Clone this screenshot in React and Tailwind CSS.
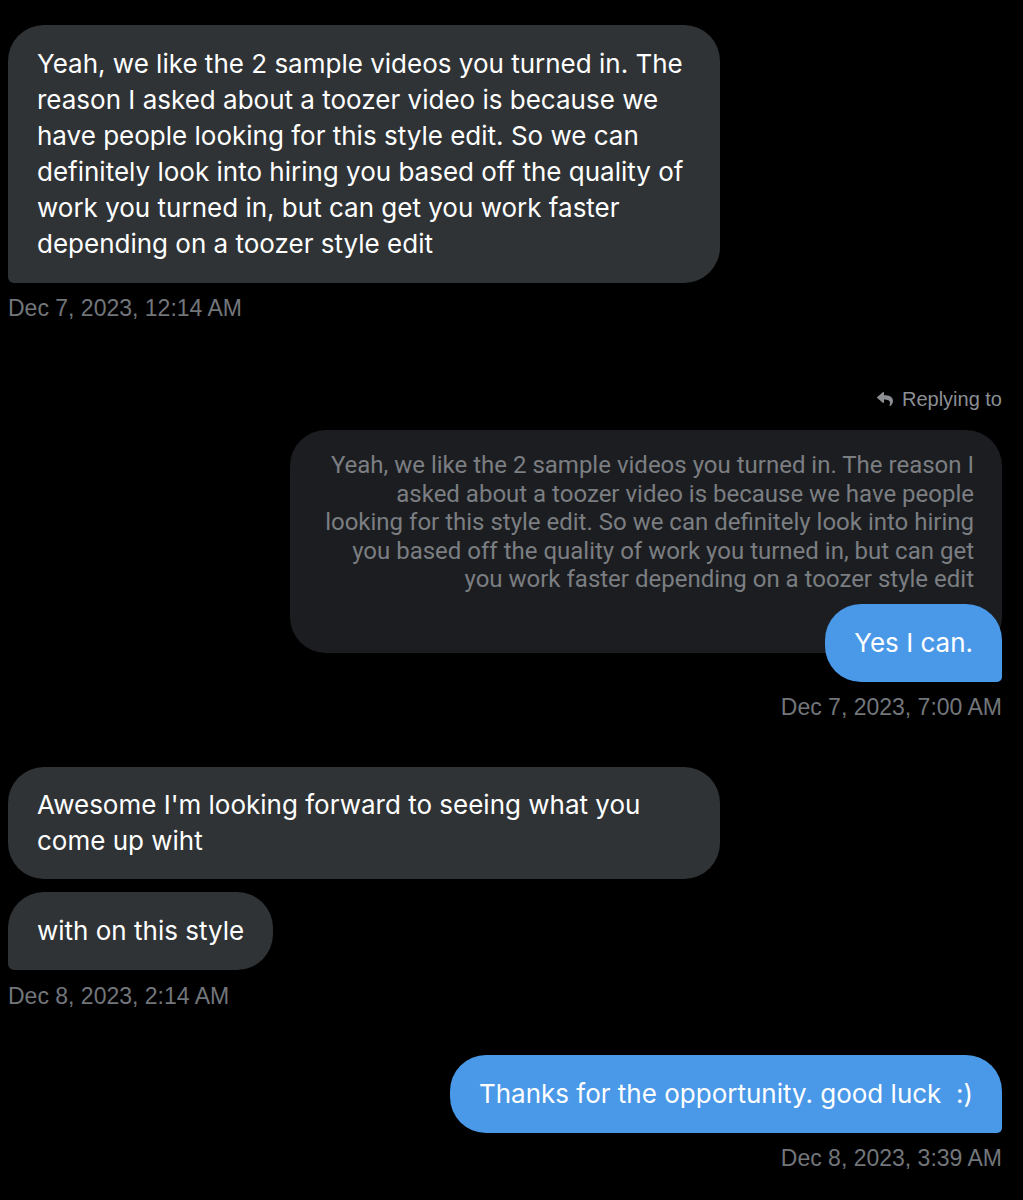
import { FaReply } from 'react-icons/fa'

const sans = "font-['Inter','Liberation_Sans',sans-serif]"

function Stamp({ children, right }) {
  return (
    <p
      className={`text-[23px] leading-[28px] text-[#72767b] font-['Liberation_Sans','Arial',sans-serif] ${right ? 'text-right' : ''}`}
    >
      {children}
    </p>
  )
}

export default function App() {
  return (
    <div className={`min-h-[1200px] bg-black ${sans} pl-[8px] pr-[21px] pt-[25px] pb-[20px]`}>
      {/* incoming: first message */}
      <div className="w-[712px] rounded-[36px] rounded-bl-[6px] bg-[#2f3336] px-[29px] py-[21px] text-[26px] leading-[36px] text-white">
        <div className="whitespace-nowrap">Yeah, we like the 2 sample videos you turned in. The</div>
        <div className="whitespace-nowrap">reason I asked about a toozer video is because we</div>
        <div className="whitespace-nowrap">have people looking for this style edit. So we can</div>
        <div className="whitespace-nowrap">definitely look into hiring you based off the quality of</div>
        <div className="whitespace-nowrap">work you turned in, but can get you work faster</div>
        <div className="whitespace-nowrap">depending on a toozer style edit</div>
      </div>
      <div className="mt-[11px]">
        <Stamp>Dec 7, 2023, 12:14 AM</Stamp>
      </div>

      {/* outgoing reply */}
      <div className="mt-[64px] flex flex-col items-end">
        <div className="flex items-center gap-[9px] text-[20px] leading-[26px] text-[#8b8f94] font-['Liberation_Sans','Arial',sans-serif]">
          <FaReply className="w-[16px] h-[16px]" />
          <span>Replying to</span>
        </div>
        <div className="mt-[18px] w-[712px] rounded-[36px] bg-[#1c1d20] pl-[24px] pr-[28px] pt-[21px] pb-[59px] text-right text-[24px] leading-[28.6px] text-[#7b7e82] font-['Roboto',sans-serif]">
          <div className="whitespace-nowrap">Yeah, we like the 2 sample videos you turned in. The reason I</div>
          <div className="whitespace-nowrap">asked about a toozer video is because we have people</div>
          <div className="whitespace-nowrap">looking for this style edit. So we can definitely look into hiring</div>
          <div className="whitespace-nowrap">you based off the quality of work you turned in, but can get</div>
          <div className="whitespace-nowrap">you work faster depending on a toozer style edit</div>
        </div>
        <div className="-mt-[49px] rounded-[36px] rounded-br-[5px] bg-[#4a98e8] px-[29px] py-[21px] text-[26px] leading-[36px] text-white">
          Yes I can.
        </div>
        <div className="mt-[11px]">
          <Stamp right>Dec 7, 2023, 7:00 AM</Stamp>
        </div>
      </div>

      {/* incoming group */}
      <div className="mt-[46px] w-[712px] rounded-[36px] bg-[#2f3336] px-[29px] py-[20px] text-[26px] leading-[36px] text-white">
        <div className="whitespace-nowrap">Awesome I'm looking forward to seeing what you</div>
        <div className="whitespace-nowrap">come up wiht</div>
      </div>
      <div className="mt-[13px] inline-block rounded-[36px] rounded-bl-[6px] bg-[#2f3336] px-[29px] py-[21px] text-[26px] leading-[36px] text-white">
        with on this style
      </div>
      <div className="mt-[12px]">
        <Stamp>Dec 8, 2023, 2:14 AM</Stamp>
      </div>

      {/* outgoing */}
      <div className="mt-[45px] flex flex-col items-end">
        <div className="rounded-[36px] rounded-br-[5px] bg-[#4a98e8] px-[29px] py-[21px] text-[26px] leading-[36px] text-white whitespace-pre">
          {'Thanks for the opportunity. good luck  :)'}
        </div>
        <div className="mt-[11px]">
          <Stamp right>Dec 8, 2023, 3:39 AM</Stamp>
        </div>
      </div>
    </div>
  )
}
